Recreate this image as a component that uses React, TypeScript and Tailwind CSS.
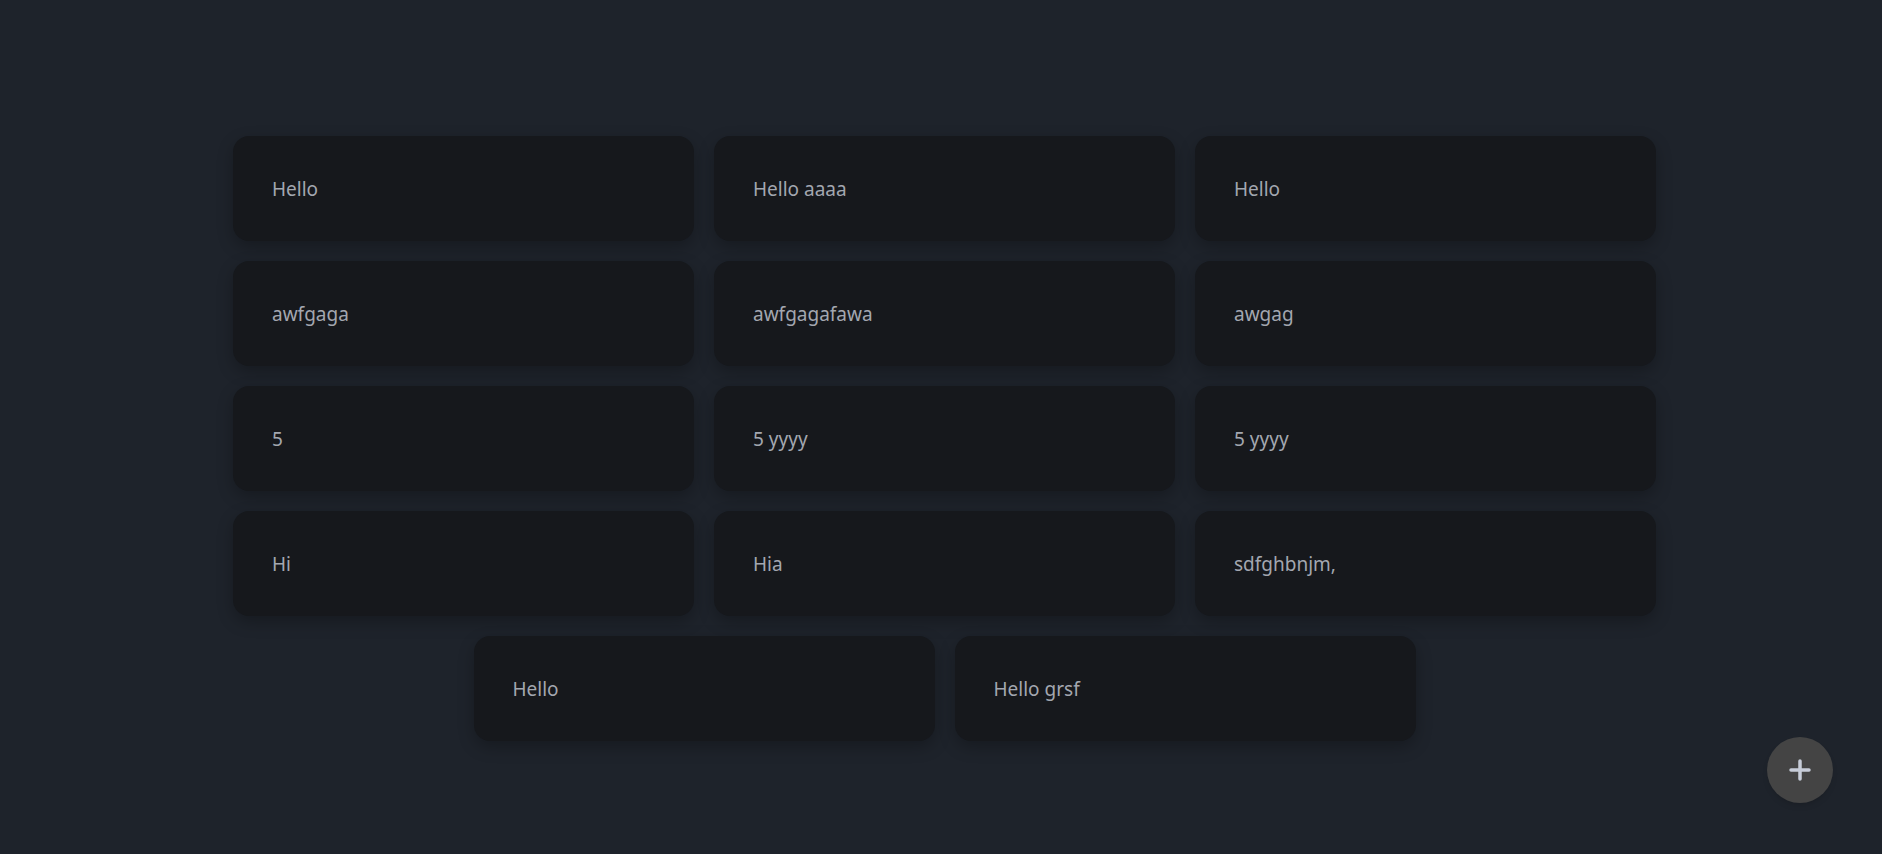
const notes = [
  "Hello",
  "Hello aaaa",
  "Hello",
  "awfgaga",
  "awfgagafawa",
  "awgag",
  "5",
  "5 yyyy",
  "5 yyyy",
  "Hi",
  "Hia",
  "sdfghbnjm,",
  "Hello",
  "Hello grsf",
];

export default function App() {
  return (
    <div className="min-h-screen bg-[#1e232b] font-['Noto_Sans',sans-serif]">
      <div className="pt-[136px] pl-[7px] flex justify-center">
        <div className="w-[1424px] flex flex-wrap justify-center gap-x-[20px] gap-y-[20px]">
          {notes.map((note, i) => (
            <div
              key={i}
              className="w-[461px] h-[105px] rounded-2xl bg-[#16181c] shadow-[0_6px_16px_rgba(0,0,0,0.25)] flex items-center pl-[39px] pr-[38px] pt-[2px]"
            >
              <span className="text-[19px] text-[#a3a7b0]">{note}</span>
            </div>
          ))}
        </div>
      </div>

      <button className="fixed right-[49px] bottom-[51px] w-[66px] h-[66px] rounded-full bg-[#444444] flex items-center justify-center shadow-md">
        <svg width="24" height="24" viewBox="0 0 24 24" fill="none" stroke="#c6ccd8" strokeWidth="3.5" strokeLinecap="round">
          <path d="M12 3v18M3 12h18" />
        </svg>
      </button>
    </div>
  );
}
